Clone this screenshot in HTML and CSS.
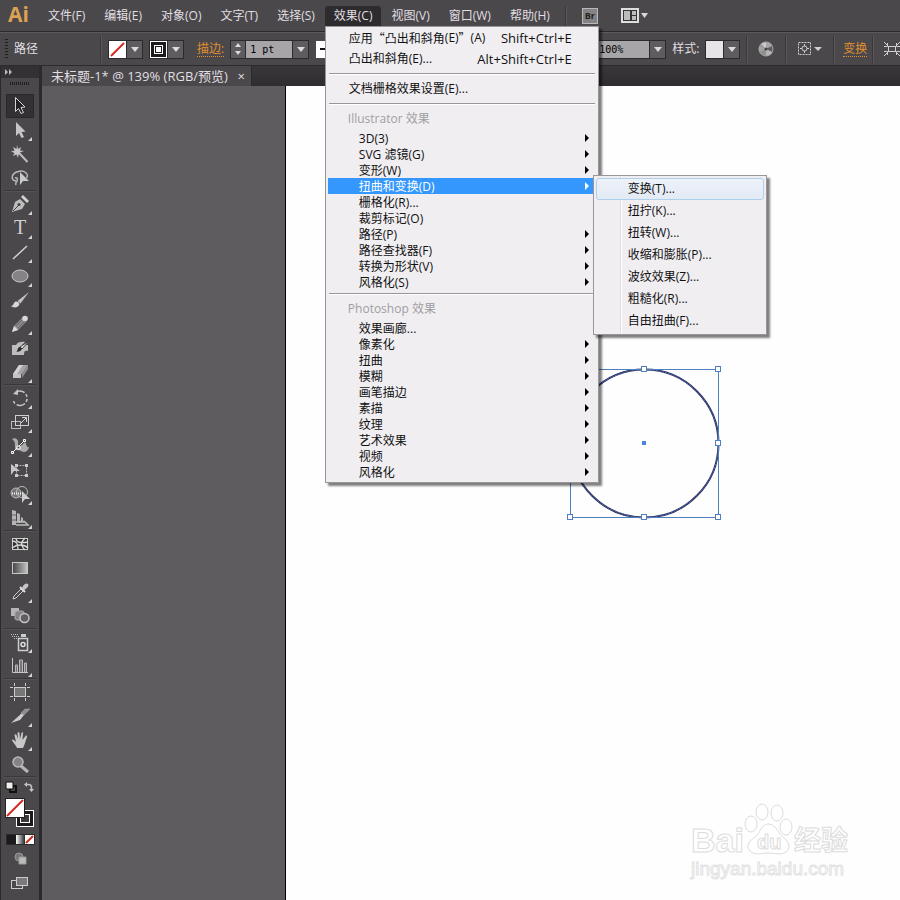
FILE: index.html
```html
<!DOCTYPE html>
<html lang="zh-CN">
<head>
  <meta charset="utf-8" />
  <title>未标题-1</title>
  <link rel="stylesheet" href="styles.css">
</head>

<body>
  <svg class="defs" width="0" height="0" aria-hidden="true">
    <defs>
      <linearGradient id="fade" x1="0" y1="0" x2="1" y2="0">
        <stop offset="0" stop-color="#444" />
        <stop offset="1" stop-color="#c4c4c4" />
      </linearGradient>
      <linearGradient id="bw" x1="0" y1="0" x2="1" y2="0">
        <stop offset="0" stop-color="#fff" />
        <stop offset="1" stop-color="#222" />
      </linearGradient>
    </defs>
  </svg>

  <header class="menubar">
    <span class="logo">Ai</span>
    <ul class="menus">
      <li><button>文件(F)</button></li>
      <li><button>编辑(E)</button></li>
      <li><button>对象(O)</button></li>
      <li><button>文字(T)</button></li>
      <li><button>选择(S)</button></li>
      <li class="open">
        <button>效果(C)</button>
        <div class="dropdown">
          <ul class="tall">
            <li><button><span class="wide">应用“凸出和斜角</span>(E)<span class="wide">”</span>(A)<kbd>Shift+Ctrl+E</kbd></button></li>
            <li><button>凸出和斜角(E)...<kbd>Alt+Shift+Ctrl+E</kbd></button></li>
          </ul>
          <hr>
          <ul class="tall">
            <li><button>文档栅格效果设置(E)...</button></li>
          </ul>
          <hr>
          <h2>Illustrator 效果</h2>
          <ul>
            <li class="sub"><button>3D(3)</button></li>
            <li class="sub"><button>SVG 滤镜(G)</button></li>
            <li class="sub"><button>变形(W)</button></li>
            <li class="sub active">
              <button>扭曲和变换(D)</button>
              <ul class="submenu">
                <li class="hover"><button>变换(T)...</button></li>
                <li><button>扭拧(K)...</button></li>
                <li><button>扭转(W)...</button></li>
                <li><button>收缩和膨胀(P)...</button></li>
                <li><button>波纹效果(Z)...</button></li>
                <li><button>粗糙化(R)...</button></li>
                <li><button>自由扭曲(F)...</button></li>
              </ul>
            </li>
            <li><button>栅格化(R)...</button></li>
            <li><button>裁剪标记(O)</button></li>
            <li class="sub"><button>路径(P)</button></li>
            <li class="sub"><button>路径查找器(F)</button></li>
            <li class="sub"><button>转换为形状(V)</button></li>
            <li class="sub"><button>风格化(S)</button></li>
          </ul>
          <hr>
          <h2>Photoshop 效果</h2>
          <ul>
            <li><button>效果画廊...</button></li>
            <li class="sub"><button>像素化</button></li>
            <li class="sub"><button>扭曲</button></li>
            <li class="sub"><button>模糊</button></li>
            <li class="sub"><button>画笔描边</button></li>
            <li class="sub"><button>素描</button></li>
            <li class="sub"><button>纹理</button></li>
            <li class="sub"><button>艺术效果</button></li>
            <li class="sub"><button>视频</button></li>
            <li class="sub"><button>风格化</button></li>
          </ul>
        </div>
      </li>
      <li><button>视图(V)</button></li>
      <li><button>窗口(W)</button></li>
      <li><button>帮助(H)</button></li>
    </ul>
    <i class="divider"></i>
    <button class="bridge" aria-label="Bridge">Br</button>
    <button class="arrange" aria-label="排列文档">
      <svg width="28" height="16">
        <rect x="1" y="1" width="16" height="13" fill="#333" stroke="#dedede" stroke-width="2" />
        <path d="M3 3h6v9H3z" fill="#bbb" />
        <path d="M11 3h4v4h-4zM11 8h4v4h-4z" fill="#bbb" />
        <path d="M20 5h7l-3.500 5z" fill="#d8d8d8" />
      </svg>
    </button>
  </header>

  <div class="controlbar">
    <i class="grip"></i>
    <span class="kind">路径</span>
    <i class="divider"></i>
    <div class="combo">
      <button class="swatch" aria-label="填色">
        <svg width="17" height="17"><rect width="17" height="17" fill="#fff" /><path d="M2 15L15 2" stroke="#d22a22" stroke-width="2" /></svg>
      </button>
      <button class="arrow" aria-label="填色选项"></button>
    </div>
    <div class="combo stroke">
      <button class="swatch" aria-label="描边颜色">
        <svg width="17" height="17"><rect width="17" height="17" fill="#fff" /><rect x="1" y="1" width="15" height="15" fill="#1e1a1b" /><rect x="4.500" y="4.500" width="8" height="8" fill="none" stroke="#fff" /><rect x="6" y="6" width="5" height="5" fill="#fff" /></svg>
      </button>
      <button class="arrow" aria-label="描边颜色选项"></button>
    </div>
    <label class="hot" for="weight">描边:</label>
    <div class="combo weight">
      <span class="spin">
        <button class="up" aria-label="增加"></button>
        <button class="down" aria-label="减少"></button>
      </span>
      <input id="weight" type="text" value="1 pt">
      <button class="arrow" aria-label="粗细选项"></button>
    </div>
    <button class="profile" aria-label="宽度配置文件"></button>
    <div class="combo opacity">
      <input type="text" value="100%" aria-label="不透明度">
      <button class="arrow" aria-label="不透明度选项"></button>
    </div>
    <span class="label">样式:</span>
    <div class="combo style">
      <button class="swatch plain" aria-label="样式"></button>
      <button class="arrow" aria-label="样式选项"></button>
    </div>
    <i class="divider"></i>
    <button class="icon" aria-label="重新着色图稿">
      <svg width="16" height="16">
        <circle cx="8" cy="8" r="7" fill="#8f8f8f" />
        <path d="M8 8L3 3a7 7 0 0 1 5-2z" fill="#c9c9c9" />
        <path d="M8 8V1a7 7 0 0 1 6 3.500z" fill="#a6a6a6" />
        <path d="M8 8l6.500-3a7 7 0 0 1 0 6z" fill="#5c5c5c" />
        <path d="M8 8l6.300 3.200A7 7 0 0 1 8 15z" fill="#b4b4b4" />
        <path d="M8 8L1.500 11a7 7 0 0 1 0-6z" fill="#a2a2a2" />
        <circle cx="8" cy="8" r="7" fill="none" stroke="#a5a5a5" />
        <circle cx="8" cy="8" r="1.500" fill="#444" />
      </svg>
    </button>
    <i class="divider"></i>
    <button class="icon" aria-label="对齐">
      <svg width="25" height="16">
        <rect x="1.500" y="1.500" width="12" height="12" fill="none" stroke="#d0d0d0" stroke-dasharray="2 1" />
        <circle cx="7.500" cy="7.500" r="2.500" fill="none" stroke="#d0d0d0" />
        <path d="M7.500 3v2M7.500 10v2M3 7.500h2M10 7.500h2" stroke="#d0d0d0" />
        <path d="M17 6h8l-4 4z" fill="#d0d0d0" />
      </svg>
    </button>
    <i class="divider"></i>
    <a class="hot" href="#">变换</a>
    <i class="divider"></i>
    <button class="icon" aria-label="隔离">
      <svg width="16" height="14">
        <rect x="4.500" y="4.500" width="7" height="5" fill="none" stroke="#d0d0d0" />
        <path d="M0 4.500h3.500V1M0 0l3 3M16 4.500h-3.500V1M16 0l-3 3M0 9.500h3.500V13M0 14l3-3M16 9.500h-3.500V13M16 14l-3-3" fill="none" stroke="#d0d0d0" />
      </svg>
    </button>
  </div>

  <div class="workspace">
    <aside class="toolbox">
      <div class="collapse"><svg width="8" height="6"><path d="M0 0l3 3-3 3zM4 0l3 3-3 3z" fill="#bbb" /></svg></div>
      <i class="handle"></i>

      <div class="tools">
        <button class="selected" aria-label="选择"><svg width="28" height="24"><path d="M9.500 3.500v14l3-3 2.500 5 2.500-1-2.500-5 4-.5z" fill="#222" stroke="#d6d6d6" /></svg></button>
        <button class="more" aria-label="直接选择"><svg width="28" height="24"><path d="M10 4v14l3-3 2.500 5 2.500-1-2.500-5 4-.5z" fill="#c6c6c6" /></svg></button>
        <button aria-label="魔棒"><svg width="28" height="24"><path d="M11 3l1 4 3-2-1 3.500 4 .5-4 1.500 2 3-3.500-1L12 16l-1.500-3.500L7 14l1.500-3L5 9.500l3.500-1L7 5l3.500 2z" fill="#c6c6c6" /><path d="M14 12l7.500 8" stroke="#bdbdbd" stroke-width="2" /></svg></button>
        <button aria-label="套索"><svg width="28" height="24"><path d="M10 15c-4-.5-5-4-2.500-7s9-4 12-1.500 2 4 1 5.500M9 12c2-1 3 1 2 3s-2 2-1 4" fill="none" stroke="#bbb" stroke-width="1.500" /><path d="M14 6v13l3-4h6z" fill="#c9c9c9" /></svg></button>
      </div>
      <hr>
      <div class="tools">
        <button class="more" aria-label="钢笔"><svg width="28" height="24"><path d="M6 20l3-10 5-3 5 5-3 5z" fill="#bdbdbd" /><path d="M7 19l6-6" stroke="#444" /><circle cx="13" cy="12.500" r="1.500" fill="#444" /><path d="M15 5l2-2 6 6-2 2z" fill="#d2d2d2" /></svg></button>
        <button class="more" aria-label="文字"><svg width="28" height="24"><text x="14" y="18" text-anchor="middle" font-family="Liberation Serif, serif" font-size="20" fill="#d0d0d0">T</text></svg></button>
        <button class="more" aria-label="直线段"><svg width="28" height="24"><path d="M7 19L21 6" stroke="#d0d0d0" stroke-width="1.500" /></svg></button>
        <button class="more" aria-label="椭圆"><svg width="28" height="24"><ellipse cx="14" cy="12" rx="8" ry="6" fill="#858385" stroke="#c8c8c8" /></svg></button>
        <button aria-label="画笔"><svg width="28" height="24"><path d="M23 4l-8.500 11.500-3-2.500z" fill="#c0c0c0" /><path d="M5 18c3 0 2-4 5-4.500 4 0 4.500 4 1 5.500-2 1-5 0-6-1z" fill="#d6d6d6" /></svg></button>
        <button class="more" aria-label="铅笔"><svg width="28" height="24"><path d="M6 20l2-6 9-9 4 4-9 9z" fill="#8b898c" /><path d="M6 20l2-6 4 4z" fill="#ddd" /><path d="M10 14l8-8M12 16l7-7" stroke="#666" /><circle cx="19" cy="6.500" r="2.800" fill="#d8d8d8" /></svg></button>
        <button aria-label="斑点画笔"><svg width="28" height="24"><path d="M6 9h4c1-3 6-4 9-3l-3 3h6v6c-3-1-4 0-4 4H6z" fill="#bdbdbd" /><path d="M24 4l-8 9-2-2z" fill="#e0e0e0" stroke="#3b393c" /><path d="M10 16c2 0 1-5 4-5 3 1 2 5-4 5z" fill="#2d2b2e" /></svg></button>
        <button class="more" aria-label="橡皮擦"><svg width="28" height="24"><path d="M7 14l6-9h9l-6 9z" fill="#a5a3a6" /><path d="M7 14l6-9h4l-6 9z" fill="#d2d2d2" /><path d="M7 14h8v4H7z" fill="#c4c4c4" /><path d="M16 14l6-9v4l-6 9z" fill="#8f8d90" /></svg></button>
      </div>
      <hr>
      <div class="tools">
        <button class="more" aria-label="旋转"><svg width="28" height="24"><path d="M10 6c6-3 11 1 11 6a7 7 0 0 1-14 1" fill="none" stroke="#c4c4c4" stroke-width="1.500" stroke-dasharray="9 2 3 2 3 2" /><path d="M7 8l5-5v6z" fill="#c4c4c4" /></svg></button>
        <button class="more" aria-label="比例缩放"><svg width="28" height="24"><rect x="5.500" y="11.500" width="9" height="7" fill="none" stroke="#bbb" /><rect x="9.500" y="5.500" width="13" height="10" fill="none" stroke="#cfcfcf" /><path d="M15 13l5-5M16 7.500h4.500V12" fill="none" stroke="#d6d6d6" /></svg></button>
        <button class="more" aria-label="宽度"><svg width="28" height="24"><path d="M6 5c4-2 7 1 6 5s2 3 5 0l2-2c2 2 1 6 4 5-1 5-5 6-8 4s-6 1-6-4 0-5-3-8z" fill="#aaa" /><path d="M6 19L18 7" stroke="#eee" /><path d="M5.500 17.500h2v2h-2zM11 12h3v3h-3zM17.500 5.500h2v2h-2z" fill="#555" stroke="#fff" /></svg></button>
        <button aria-label="自由变换"><svg width="28" height="24"><rect x="10.500" y="7.500" width="10" height="10" fill="none" stroke="#bbb" stroke-dasharray="2 1" /><path d="M9 6h3v3H9zM19 6h3v3h-3zM9 16h3v3H9zM19 16h3v3h-3z" fill="#ccc" /><path d="M5 6v11l3-4h6z" fill="#c6c6c6" /></svg></button>
        <button class="more" aria-label="形状生成器"><svg width="28" height="24"><circle cx="10" cy="11" r="5" fill="#777" stroke="#b8b8b8" /><circle cx="16" cy="10" r="5.500" fill="none" stroke="#b8b8b8" /><path d="M6 11.500h10" stroke="#eee" stroke-dasharray="1 1" stroke-width="2" /><path d="M16 9v12l3-4h5z" fill="#ccc" /></svg></button>
        <button class="more" aria-label="透视网格"><svg width="28" height="24"><path d="M6 4l4 1v14H6zM11 7l3 1v9l-3-1zM15 11l2 1v4h-2z" fill="#b5b5b5" /><path d="M10 19h12l-3-3h-9M14 15.500h5" fill="none" stroke="#bbb" stroke-width="1.500" /><path d="M6 9h4M6 14h4" stroke="#666" /></svg></button>
      </div>
      <hr>
      <div class="tools">
        <button aria-label="网格"><svg width="28" height="24"><rect x="6.500" y="6.500" width="15" height="11" fill="#333" stroke="#ccc" /><path d="M6 9c5 0 6 3 6 9M10 6c0 5 5 5 12 4M6 16c5-4 12-4 16 0M19 6c-4 4-5 7 0 12" fill="none" stroke="#d8d8d8" stroke-width="1.300" /></svg></button>
        <button aria-label="渐变"><svg width="28" height="24"><rect x="6.500" y="6.500" width="15" height="11" fill="url(#fade)" stroke="#c8c8c8" /></svg></button>
        <button class="more" aria-label="吸管"><svg width="28" height="24"><path d="M7 19l1-3 7-7 2 2-7 7z" fill="none" stroke="#ccc" /><path d="M14 7l5 5" stroke="#ddd" stroke-width="2" /><path d="M16 8c2-5 5-5 6-4s0 4-4 6z" fill="#c6c6c6" /></svg></button>
        <button aria-label="混合"><svg width="28" height="24"><path d="M5 4h8v8H5z" fill="#b5b5b5" /><rect x="9" y="7" width="9" height="9" rx="2" fill="#858385" stroke="#aaa" /><circle cx="18.500" cy="14" r="4.500" fill="#605e61" stroke="#c6c6c6" stroke-width="1.500" /></svg></button>
      </div>
      <hr>
      <div class="tools">
        <button class="more" aria-label="符号喷枪"><svg width="28" height="24"><rect x="12.500" y="8.500" width="9" height="12" fill="#4a484b" stroke="#ccc" stroke-width="1.500" /><circle cx="17" cy="14.500" r="2" fill="none" stroke="#ddd" stroke-width="1.500" /><path d="M15 4h5v3h-5z" fill="#ccc" /><path d="M5 4.500h8M6 6.500h8M8 8.500h4" stroke="#bbb" stroke-dasharray="1 1" /></svg></button>
        <button class="more" aria-label="柱形图"><svg width="28" height="24"><path d="M6.500 4v14.500H22" fill="none" stroke="#c6c6c6" /><path d="M9.500 18v-7h2v7M13.500 18V6h3v12M18.500 18v-9h2v9" fill="#777" stroke="#b8b8b8" /></svg></button>
      </div>
      <hr>
      <div class="tools">
        <button aria-label="画板"><svg width="28" height="24"><rect x="8.500" y="7.500" width="11" height="9" fill="#777" stroke="#ccc" /><path d="M8.500 3v3M19.500 3v3M8.500 18v3M19.500 18v3M4 7.500h3M4 16.500h3M21 7.500h3M21 16.500h3" stroke="#ccc" /></svg></button>
        <button class="more" aria-label="切片"><svg width="28" height="24"><path d="M5 19L16 9l2 2-4 5z" fill="#ccc" /><path d="M15 9l4-4h5l-6 6z" fill="#8f8d90" stroke="#aaa" stroke-width=".5" /></svg></button>
        <button class="more" aria-label="抓手"><svg width="28" height="24"><path d="M11 20c-1-3-4-5-5-8 1-1 2 0 4 2L8.500 7c0-1 1.500-1 2 0l1.500 4-.5-6c0-1 2-1 2 0l.5 6 1.500-6c.5-1 2-1 1.500.5L16.500 12l3-4c1-1 2 0 1.500 1-1.500 4-2 7-4 11z" fill="#c8c8c8" /></svg></button>
        <button aria-label="缩放"><svg width="28" height="24"><path d="M15 14l7 6" stroke="#b5b5b5" stroke-width="3" /><circle cx="12" cy="10" r="5" fill="#858385" stroke="#b8b8b8" stroke-width="1.500" /></svg></button>
      </div>
      <hr>

      <div class="swap">
        <button aria-label="默认填色和描边"><svg width="12" height="12"><rect x="5" y="5" width="6" height="6" fill="none" stroke="#111" stroke-width="2" /><path d="M1 1h7v7H1z" fill="#eee" stroke="#111" /></svg></button>
        <button aria-label="互换填色和描边"><svg width="12" height="12"><path d="M3 3.500h2.500q3 0 3 3V9" fill="none" stroke="#c4c4c4" stroke-width="1.500" /><path d="M1 3.500L4 1v5zM6 8h5l-2.500 3z" fill="#c4c4c4" /></svg></button>
      </div>
      <button class="colors" aria-label="填色和描边">
        <svg width="30" height="30">
          <rect x="11.500" y="12.500" width="17" height="16" fill="#1e1a1b" stroke="#fff" />
          <rect x="15.500" y="16.500" width="9" height="8" fill="#3c3a3d" stroke="#fff" />
          <rect x=".5" y=".5" width="19" height="19" fill="#fff" stroke="#222" />
          <path d="M2 18L18 2" stroke="#d22a22" stroke-width="2" />
        </svg>
      </button>
      <div class="modes">
        <button aria-label="颜色"><svg width="9" height="9"><rect width="9" height="9" fill="#1e1a1b" /></svg></button>
        <button aria-label="渐变"><svg width="9" height="9"><rect width="9" height="9" fill="url(#bw)" /></svg></button>
        <button aria-label="无"><svg width="9" height="9"><rect width="9" height="9" fill="#fff" /><path d="M1 8l7-7" stroke="#d22a22" stroke-width="2" /></svg></button>
      </div>
      <button class="foot" aria-label="绘图模式"><svg width="28" height="24"><circle cx="13" cy="10" r="4" fill="#777" stroke="#999" /><path d="M13 10h7v7h-7z" fill="#bbb" stroke="#999" /></svg></button>
      <button class="foot" aria-label="屏幕模式"><svg width="28" height="24"><rect x="5.500" y="9.500" width="11" height="8" fill="#4a484b" stroke="#ccc" /><rect x="10.500" y="6.500" width="11" height="8" fill="#7b797c" stroke="#ccc" /></svg></button>
    </aside>

    <main class="document">
      <div class="tabs">
        <div class="tab">未标题-1* @ 139% (RGB/预览)<button aria-label="关闭">×</button></div>
      </div>
      <div class="canvas">
        <div class="artboard">
          <svg class="shape" width="158" height="158">
            <g fill="none">
              <circle cx="78.500" cy="78.500" r="74" stroke="#2c2a58" stroke-width="2" />
              <circle cx="78.500" cy="78.500" r="74" stroke="#4d7cc4" stroke-width="1" stroke-dasharray="2 1" />
              <rect x="4.500" y="4.500" width="148" height="148" stroke="#4f80bd" />
            </g>
            <g fill="#fff" stroke="#4f80bd">
              <rect x="1.500" y="1.500" width="5" height="5" />
              <rect x="75.500" y="1.500" width="5" height="5" />
              <rect x="149.500" y="1.500" width="5" height="5" />
              <rect x="1.500" y="75.500" width="5" height="5" />
              <rect x="149.500" y="75.500" width="5" height="5" />
              <rect x="1.500" y="149.500" width="5" height="5" />
              <rect x="75.500" y="149.500" width="5" height="5" />
              <rect x="149.500" y="149.500" width="5" height="5" />
            </g>
            <rect x="76" y="76" width="4" height="4" fill="#4a86d8" />
          </svg>
          <svg class="watermark" width="170" height="84">
            <g fill="#fff" stroke="#dcdcdc" font-family="Liberation Sans, Noto Sans CJK SC, sans-serif" font-weight="bold">
              <text x="5" y="52" font-size="34">Bai</text>
              <ellipse cx="65" cy="24" rx="6" ry="8" />
              <ellipse cx="76" cy="12" rx="6" ry="8" />
              <ellipse cx="91" cy="13" rx="6" ry="8" />
              <ellipse cx="100" cy="27" rx="6" ry="8" />
              <path d="M82 24c8 0 9 8 15 13s8 10 4 14c-5 5-12 2-19 2s-13 3-18-2 0-11 5-14 6-13 13-13z" />
              <text x="71" y="49" font-size="20">du</text>
              <text x="108" y="50" font-size="27">经验</text>
            </g>
            <text x="5" y="75" font-size="19" font-family="Liberation Sans, sans-serif" fill="#fff" stroke="#e2e2e2">jingyan.baidu.com</text>
          </svg>
        </div>
      </div>
    </main>
  </div>
</body>
</html>
```
FILE: styles.css
```css
* {
  box-sizing: border-box;
}

body {
  margin: 0;
  min-height: 100vh;
  display: flex;
  flex-direction: column;
  overflow: hidden;
  background: #4a484b;
  color: #e0dfe1;
  font: 12px/16px "Open Sans", "Noto Sans CJK SC", sans-serif;
}

ul {
  margin: 0;
  padding: 0;
  list-style: none;
}

button {
  margin: 0;
  padding: 0;
  border: 0;
  background: none;
  color: inherit;
  font: inherit;
}

svg { display: block; }
.defs { position: absolute; }

.divider {
  width: 2px;
  height: 27px;
  flex: none;
  background: #39373a;
  border-right: 1px solid #5a585b;
}

/* Menu bar */
.menubar {
  display: flex;
  align-items: center;
  height: 32px;
  border-bottom: 1px solid #2b2a2c;
  white-space: nowrap;
}

.logo {
  width: 31px;
  margin-left: 8px;
  margin-bottom: 4px;
  color: #dba253;
  font-size: 21px;
  font-weight: bold;
}

.menus {
  display: flex;
  gap: 1px;
}

.menus > li { position: relative; }

.menus > li > button {
  height: 20px;
  padding: 0 9px;
}

.menus > .open > button {
  background: #2d2b2e;
  border-radius: 3px 3px 0 0;
}

.menubar .divider {
  height: 20px;
  margin: 0 15px 0 6px;
}

.bridge {
  width: 16px;
  height: 16px;
  margin-right: 23px;
  background: #858386;
  border: 1px solid #b9b7ba;
  color: #222;
  font-size: 9px;
  line-height: 12px;
  font-weight: bold;
}

/* Dropdown */
.dropdown {
  position: absolute;
  z-index: 10;
  top: 20px;
  left: 0;
  width: 274px;
  padding: 1px 2px 2px;
  background: #f0eef1;
  border: 1px solid #98969a;
  box-shadow: 3px 3px 2px rgba(0, 0, 0, .5);
  color: #111;
}

.dropdown li { position: relative; }

.dropdown button {
  display: flex;
  width: 100%;
  height: 16px;
  padding: 2px 24px 0 31px;
  align-items: center;
  text-align: left;
}

.dropdown .tall button {
  height: 21px;
  padding-top: 0;
  padding-left: 21px;
}

/* full-width quotation marks */
.wide { font-family: "Noto Sans CJK SC", sans-serif; }

.dropdown kbd {
  margin-left: auto;
  font: inherit;
  font-size: 13px;
}

.dropdown hr {
  height: 2px;
  margin: 3px 1px 4px;
  border: 0;
  border-top: 1px solid #98969a;
  background: #fff;
}

.dropdown h2 {
  margin: 0;
  padding-left: 20px;
  color: #a09ea2;
  font-size: 12px;
  font-weight: normal;
  line-height: 20px;
  height: 21px;
}

.sub::after {
  content: "";
  position: absolute;
  top: 4px;
  right: 7px;
  border: 4px solid transparent;
  border-left-color: #000;
  border-right-width: 0;
}

.sub.active {
  background: #3397fe;
  color: #fff;
}

.sub.active::after { border-left-color: #fff; }

.dropdown .submenu {
  position: absolute;
  z-index: 11;
  top: -3px;
  left: 265px;
  width: 174px;
  padding: 2px;
  border: 1px solid #98969a;
  background: linear-gradient(to right, transparent 26px, #dddbdf 26px, #dddbdf 27px, #fff 27px, #fff 28px, transparent 28px) #f0eef1;
  box-shadow: 3px 3px 2px rgba(0, 0, 0, .5);
  color: #111;
}

.dropdown .submenu button {
  height: 22px;
  padding-top: 0;
  border: 1px solid transparent;
}

.dropdown .submenu .hover button {
  background: linear-gradient(#eef2f9, #e2eaf4);
  border-color: #aed0ec;
  border-radius: 3px;
}

/* Control bar */
.controlbar {
  display: flex;
  align-items: center;
  height: 34px;
  padding-left: 5px;
  border-top: 1px solid #5c5a5d;
  border-bottom: 1px solid #2b2a2c;
  white-space: nowrap;
  overflow: hidden;
}

.controlbar > * { flex: none; }

.grip {
  width: 3px;
  height: 20px;
  margin-right: 6px;
  background: repeating-linear-gradient(#1f1e20 0 1px, #4a484b 1px 3px);
}

.kind { width: 86px; }
.controlbar .kind + .divider { margin-right: 6px; }

.combo {
  display: flex;
  height: 19px;
  border: 1px solid #2b2a2c;
}

.combo.stroke { margin: 0 13px 0 6px; }

.swatch {
  width: 17px;
  height: 17px;
}

.swatch.plain { background: #e6e4e7; }

.arrow {
  width: 16px;
  border-left: 1px solid #2b2a2c;
  background: #5e5c5f;
}

.arrow::after {
  content: "";
  display: block;
  width: 0;
  margin: auto;
  border: 4px solid transparent;
  border-top: 5px solid #dcdadd;
  border-bottom: 0;
}

.combo input {
  width: 46px;
  padding: 0 4px;
  border: 0;
  background: #a7a5a8;
  color: #000;
  font: 10px "DejaVu Sans Mono", monospace;
}

.hot {
  color: #e0902f;
  border-bottom: 1px dotted #e0902f;
  line-height: 15px;
  text-decoration: none;
}

.weight { margin: 0 7px 0 6px; }

.spin {
  display: flex;
  flex-direction: column;
  width: 15px;
  border-right: 1px solid #2b2a2c;
  background: #5e5c5f;
}

.spin button { height: 8px; }

.spin button::after {
  content: "";
  display: block;
  width: 0;
  margin: 2px auto;
  border: 3px solid transparent;
}

.spin .up::after {
  border-bottom: 4px solid #dcdadd;
  border-top: 0;
}

.spin .down::after {
  border-top: 4px solid #dcdadd;
  border-bottom: 0;
}

.profile {
  width: 160px;
  height: 17px;
  margin-right: 118px;
  background: linear-gradient(#111, #111) 4px 7px / 20px 2px no-repeat #fff;
}

.opacity input { width: 54px; }
.label { margin: 0 6px; }
.style { margin-right: 6px; }
.icon { margin: 0 10px; }
.controlbar .icon + .divider { margin-left: 1px; }
.controlbar a.hot { margin: 0 5px 0 8px; }

/* Workspace */
.workspace {
  display: flex;
  flex: 1;
}

.toolbox {
  width: 42px;
  flex: none;
  border-left: 1px solid #2b2a2c;
  border-right: 3px solid #2b2a2c;
}

.collapse {
  height: 12px;
  padding: 3px 4px;
  background: #333134;
}

.handle {
  display: block;
  width: 20px;
  height: 3px;
  margin: 4px auto 9px;
  background: repeating-linear-gradient(to right, #1f1e20 0 1px, #4a484b 1px 2px);
}

.tools {
  display: flex;
  flex-direction: column;
  align-items: center;
}

.tools button {
  position: relative;
  width: 28px;
  height: 24px;
}

.tools .selected {
  background: #333134;
  box-shadow: inset 0 0 0 1px #29272a;
}

.tools .more::after {
  content: "";
  position: absolute;
  right: 2px;
  bottom: 1px;
  border: 2px solid #d4d4d4;
  border-top-color: transparent;
  border-left-color: transparent;
}

.toolbox hr {
  height: 2px;
  margin: 0 3px;
  border: 0;
  border-top: 1px solid #39373a;
  background: #555356;
}

.swap {
  display: flex;
  justify-content: space-between;
  padding: 3px 4px 5px;
}

.colors {
  display: block;
  margin: 0 4px 6px;
}

.modes {
  display: flex;
  width: 29px;
  margin: 0 5px 2px;
  border: 1px solid #2b2a2c;
}

.foot {
  display: block;
  margin: 0 auto;
}

.document {
  display: flex;
  flex: 1;
  flex-direction: column;
}

.tabs {
  height: 20px;
  background: linear-gradient(#39373a, #2f2d30);
}

.tab {
  display: flex;
  justify-content: space-between;
  width: 210px;
  height: 20px;
  padding: 0 6px 0 9px;
  background: #4a484b;
  border-right: 1px solid #2b2a2c;
  font-size: 13px;
  line-height: 20px;
  white-space: nowrap;
}

.canvas {
  display: flex;
  flex: 1;
  padding-left: 243px;
  background: #5e5c5f;
}

.artboard {
  position: relative;
  flex: 1;
  background: #fefefe;
  border-left: 1px solid #000;
}

.shape {
  position: absolute;
  top: 279px;
  left: 280px;
}

.watermark {
  position: absolute;
  right: 44px;
  bottom: 16px;
}
```
